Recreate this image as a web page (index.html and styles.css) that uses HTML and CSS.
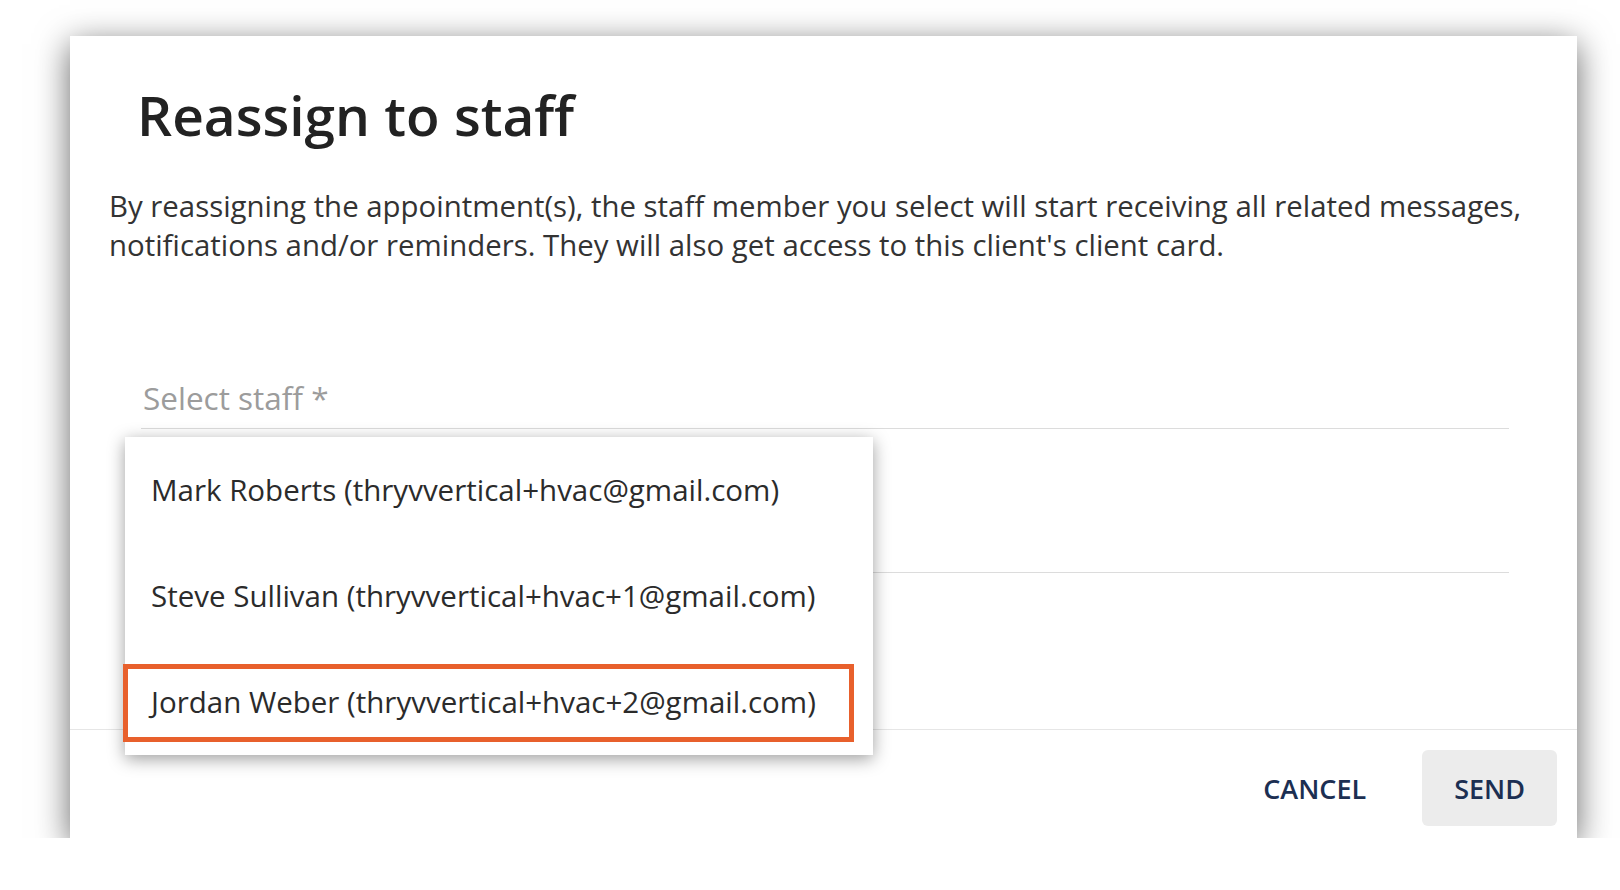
FILE: index.html
```html
<!DOCTYPE html>
<html lang="en">
<head>
    <meta charset="UTF-8">
    <title>Reassign to staff</title>
    <link rel="stylesheet" href="styles.css">
</head>
<body>
    <div class="dialog">
        <div class="dialog-body">
            <h1 class="title">Reassign to staff</h1>
            <p class="intro">By reassigning the appointment(s), the staff member you select will start receiving all related messages, notifications and/or reminders. They will also get access to this client's client card.</p>

            <div class="field">
                <span class="field-label">Select staff *</span>
            </div>
            <div class="field field-second"></div>
        </div>

        <div class="dialog-footer">
            <button class="btn">CANCEL</button>
            <button class="btn btn-send">SEND</button>
        </div>

        <ul class="menu">
            <li class="menu-item">Mark Roberts (thryvvertical+hvac@gmail.com)</li>
            <li class="menu-item">Steve Sullivan (thryvvertical+hvac+1@gmail.com)</li>
            <li class="menu-item">
                Jordan Weber (thryvvertical+hvac+2@gmail.com)
                <span class="highlight"></span>
            </li>
        </ul>
    </div>
</body>
</html>
```

FILE: styles.css
```css
body {
    margin: 0;
    padding: 36px 0 0 70px;
    background-color: #ffffff;
    font-family: 'Open Sans', 'Noto Sans', sans-serif;
    color: #2b2b2b;
}

.dialog {
    position: relative;
    width: 1507px;
    height: 802px;
    background-color: #ffffff;
    box-shadow: 0 8px 32px rgba(0, 0, 0, 0.6);
    display: flex;
    flex-direction: column;
}

.dialog-body {
    padding: 45px 36px 0 39px;
}

.title {
    margin: 0 0 39px 28px;
    font-size: 55px;
    line-height: 67px;
    font-weight: 600;
    color: #222222;
}

.intro {
    margin: 0;
    font-size: 29.4px;
    line-height: 39px;
    color: #333333;
}

.field {
    margin: 113px 32px 0 32px;
    height: 50px;
    border-bottom: 1px solid #dcdcdc;
}

.field-label {
    display: block;
    padding-left: 2px;
    font-size: 31.5px;
    line-height: 40px;
    color: #9c9c9c;
}

.field-second {
    margin-top: 93px;
}

.dialog-footer {
    margin-top: auto;
    border-top: 1px solid #e6e6e6;
    padding: 20px 20px 12px 0;
    display: flex;
    justify-content: flex-end;
    gap: 24px;
}

.btn {
    height: 76px;
    padding: 0 32px;
    border: none;
    border-radius: 6px;
    background: transparent;
    font-family: 'Open Sans', 'Noto Sans', sans-serif;
    font-size: 27px;
    font-weight: 600;
    color: #1c2f52;
}

.btn-send {
    background-color: #ececec;
}

.menu {
    position: absolute;
    left: 55px;
    top: 401px;
    width: 748px;
    margin: 0;
    padding: 0;
    list-style: none;
    background-color: #ffffff;
    box-shadow: 0 4px 16px rgba(0, 0, 0, 0.38);
}

.menu-item {
    position: relative;
    height: 106px;
    line-height: 106px;
    padding-left: 26px;
    font-size: 29.5px;
    color: #2b2b2b;
}

.highlight {
    position: absolute;
    left: -2px;
    top: 15px;
    width: 721px;
    height: 68px;
    border: 5px solid #e8602c;
}
```
